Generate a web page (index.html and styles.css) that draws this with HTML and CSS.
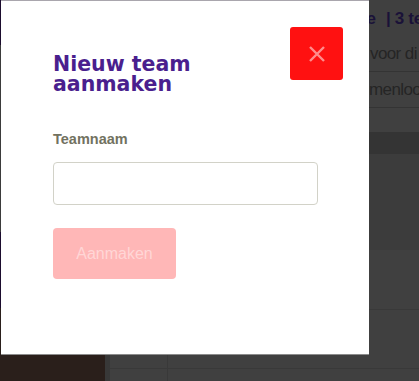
FILE: index.html
```html
<!DOCTYPE html>
<html lang="nl">
<head>
<meta charset="utf-8">
<title>Nieuw team aanmaken</title>
<link rel="stylesheet" href="styles.css">
</head>
<body>
<div class="page">
  <aside class="sidebar">
    <div class="sb sb-top"></div>
    <div class="sb sb-mid"></div>
    <div class="sb sb-low"></div>
    <div class="sb sb-bottom"></div>
  </aside>
  <div class="gutter"></div>
  <main class="main">
    <div class="head">
      <span class="head-title">Teams in de divisie</span>
      <span class="head-sep">|</span>
      <span class="head-count">3 te</span>
    </div>
    <div class="row">voor di</div>
    <div class="row row-2">menloo</div>
    <div class="band band-a"></div>
    <div class="band band-b"></div>
    <div class="band band-c"></div>
    <div class="table">
      <div class="trow"><div class="tcell first"></div><div class="tcell"></div></div>
      <div class="trow"><div class="tcell first"></div><div class="tcell"></div></div>
      <div class="trow"><div class="tcell first"></div><div class="tcell"></div></div>
    </div>
  </main>
</div>

<div class="modal" role="dialog" aria-labelledby="modal-title">
  <div class="modal-head">
    <h2 id="modal-title" class="modal-title">Nieuw team aanmaken</h2>
    <button class="close-btn" type="button" aria-label="Sluiten">
      <svg width="18" height="18" viewBox="0 0 18 18" aria-hidden="true">
        <path d="M2 2 L16 16 M16 2 L2 16" stroke="#ff8c8c" stroke-width="2.4" stroke-linecap="butt" fill="none"/>
      </svg>
    </button>
  </div>
  <label class="field-label" for="teamname">Teamnaam</label>
  <input class="field-input" id="teamname" type="text">
  <button class="submit-btn" type="button" disabled>Aanmaken</button>
</div>
</body>
</html>
```

FILE: styles.css
```css
* { box-sizing: border-box; }

html, body {
  margin: 0;
  padding: 0;
}

body {
  width: 419px;
  height: 381px;
  overflow: hidden;
  background: #404040;
  font-family: "Liberation Sans", Arial, sans-serif;
  position: relative;
}

.page {
  display: flex;
  height: 381px;
  overflow: hidden;
}

.sidebar {
  width: 105px;
  display: flex;
  flex-direction: column;
  flex-shrink: 0;
}

.sb { flex-shrink: 0; }
.sb-top { height: 45px; background: #1b0c2e; }
.sb-mid { height: 187px; background: #3b3b3b; }
.sb-low { height: 76px; background: #1b0c2e; }
.sb-bottom { flex: 1; background: #2a1f1b; }

.gutter {
  width: 5px;
  flex-shrink: 0;
  background: #383838;
}

.main {
  flex: 1;
  display: flex;
  flex-direction: column;
  background: #404040;
  min-width: 0;
  overflow: hidden;
}

.main > * { flex-shrink: 0; }

.head {
  height: 36px;
  display: flex;
  align-items: flex-start;
  padding-top: 9px;
  font-size: 17px;
  font-weight: bold;
  color: #1a1238;
  white-space: nowrap;
  line-height: 20px;
}

.head-title {
  width: 266px;
  text-align: right;
  flex-shrink: 0;
}

.head-sep { margin-left: 10px; flex-shrink: 0; }
.head-count { margin-left: 4px; flex-shrink: 0; letter-spacing: -0.3px; }

.row {
  height: 36px;
  padding-top: 1px;
  padding-left: 260px;
  font-size: 17px;
  letter-spacing: -0.6px;
  line-height: 34px;
  color: #252525;
  white-space: nowrap;
  border-bottom: 1px solid #343434;
}

.row-2 { padding-left: 259px; }

.band-a { height: 24px; background: #404040; }
.band-b { height: 22px; background: #343434; }
.band-c { height: 96px; background: #3c3c3c; }

.table {
  display: flex;
  flex-direction: column;
}

.trow {
  height: 59px;
  flex-shrink: 0;
  display: flex;
  border-bottom: 1px solid #393939;
}

.trow:first-child { height: 60px; }

.tcell { flex: 1; }
.tcell.first {
  flex: 0 0 58px;
  border-right: 1px solid #393939;
}

/* Modal overlay */
.modal {
  position: absolute;
  left: 1px;
  top: 0;
  width: 368px;
  height: 355px;
  background: #ffffff;
  border-top: 1px solid #a9a6ad;
  border-bottom: 1px solid #8c8c8c;
  padding: 26px 26px 0 52px;
}

.modal-head {
  display: flex;
  justify-content: space-between;
  align-items: flex-start;
}

.modal-title {
  margin: 27px 0 0 0;
  font-family: "DejaVu Sans", Verdana, sans-serif;
  font-weight: bold;
  font-size: 20.5px;
  line-height: 20px;
  color: #4a1f8e;
  width: 220px;
}

.close-btn {
  width: 53px;
  height: 53px;
  flex-shrink: 0;
  border: none;
  border-radius: 3px;
  background: #ff1111;
  padding: 0;
  display: flex;
  align-items: center;
  justify-content: center;
  cursor: pointer;
}

.close-btn svg { display: block; }

.field-label {
  display: block;
  margin-top: 37px;
  font-family: "Liberation Sans", Arial, sans-serif;
  font-weight: bold;
  font-size: 14.5px;
  line-height: 17px;
  color: #72725f;
}

.field-input {
  display: block;
  margin-top: 14px;
  width: 265px;
  height: 43px;
  border: 1px solid #d2d2c8;
  border-radius: 4px;
  background: #fff;
  padding: 0 10px;
  font-family: "Liberation Sans", Arial, sans-serif;
  font-size: 16px;
  outline: none;
}

.submit-btn {
  display: block;
  margin-top: 23px;
  width: 123px;
  height: 51px;
  border: none;
  border-radius: 4px;
  background: #ffb7b7;
  color: #ffd6d6;
  font-family: "Liberation Sans", Arial, sans-serif;
  font-size: 16px;
  padding: 0;
}
```
